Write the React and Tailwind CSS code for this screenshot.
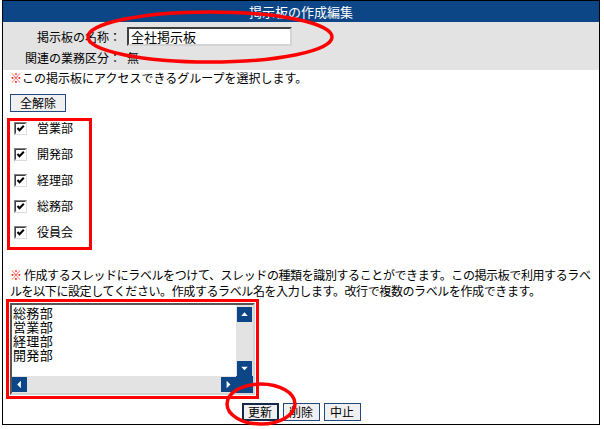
import React from "react";

function Check() {
  return (
    <span className="flex h-[13px] w-[13px] items-center justify-center border border-t-[#808080] border-l-[#808080] border-b-[#dcdcdc] border-r-[#dcdcdc] bg-white">
      <span className="flex h-[11px] w-[11px] items-center justify-center border border-t-[#404040] border-l-[#404040] border-b-white border-r-white">
        <svg width="9" height="9" viewBox="0 0 9 9">
          <path d="M1.5 4 L3.5 6.2 L7.8 1.8" stroke="#000" strokeWidth="2" fill="none" />
        </svg>
      </span>
    </span>
  );
}

function ArrowBtn({ dir }) {
  const pts = {
    up: "3.5,8.5 7,4.5 10.5,8.5",
    down: "3.5,5 7,9 10.5,5",
    left: "8.5,3 4.5,7 8.5,11",
    right: "5,3 9,7 5,11",
  }[dir];
  return (
    <span className="flex h-[15px] w-[15px] items-center justify-center border border-[#0c4687] bg-white">
      <span className="flex h-[13px] w-[13px] items-center justify-center bg-[#0c4687]">
        <svg width="13" height="13" viewBox="0 0 14 14">
          <polygon points={pts} fill="#fff" />
        </svg>
      </span>
    </span>
  );
}

export default function App() {
  const groups = ["営業部", "開発部", "経理部", "総務部", "役員会"];
  return (
    <div className="relative h-[429px] w-[604px] bg-white font-['Noto_Sans_CJK_JP','Noto_Sans',sans-serif] text-[12px] text-black">
      <div className="ml-[2px] flex h-[425px] w-[598px] flex-col border border-black bg-white">
        <div className="flex h-[21px] items-center justify-center bg-[#0c4687] text-[13px] leading-none text-white">
          掲示板の作成編集
        </div>
        <div className="grid h-[48px] grid-cols-[118px_1fr] items-center gap-x-[6px] gap-y-[4px] bg-[#e3e3e3] pt-[5px] content-start">
          <div className="text-right leading-[19px]">掲示板の名称：</div>
          <div className="flex h-[19px] w-[165px] items-center border-2 border-t-[#404040] border-l-[#404040] border-b-[#d4d4d4] border-r-[#d4d4d4] bg-white pl-[2px] text-[13px] leading-none">
            全社掲示板
          </div>
          <div className="text-right leading-[16px]">関連の業務区分：</div>
          <div className="leading-[16px]">無</div>
        </div>
        <div className="ml-[7px] leading-[16px]">
          <span className="text-[#ff0000]">※</span>この掲示板にアクセスできるグループを選択します。
        </div>
        <button className="ml-[7px] mt-[8px] flex h-[18px] w-[56px] items-center justify-center border border-[#24487e] bg-[#f0f0f0] leading-none">
          全解除
        </button>
        <div className="ml-[4px] mt-[6px] flex h-[132px] w-[85px] flex-col gap-[12px] border-[3px] border-[#ff0000] pl-[4px]">
          {groups.map((g) => (
            <div key={g} className="flex h-[14px] items-center gap-[10px]">
              <Check />
              <span className="leading-none">{g}</span>
            </div>
          ))}
        </div>
        <div className="ml-[7px] mt-[17px] whitespace-nowrap leading-[16px] tracking-[-0.4px]">
          <div>
            <span className="text-[#ff0000]">※</span> 作成するスレッドにラベルをつけて、スレッドの種類を識別することができます。この掲示板で利用するラベ
          </div>
          <div>ルを以下に設定してください。作成するラベル名を入力します。改行で複数のラベルを作成できます。</div>
        </div>
        <div className="ml-[3px] h-[100px] w-[253px] border-[3px] border-[#ff0000] p-[1px]">
          <div className="grid h-[92px] w-[245px] grid-cols-[1fr_17px] grid-rows-[1fr_17px] border-2 border-t-[#555555] border-l-[#555555] border-b-[#d4d4d4] border-r-[#d4d4d4] bg-white">
            <div className="pl-[1px] pt-[1px] text-[13px] leading-[14px] tracking-[0.35px]">
              <div>総務部</div>
              <div>営業部</div>
              <div>経理部</div>
              <div>開発部</div>
            </div>
            <div className="flex flex-col items-center justify-between bg-[#e3e3e3] pt-[2px]">
              <ArrowBtn dir="up" />
              <ArrowBtn dir="down" />
            </div>
            <div className="flex items-center justify-between bg-[#e3e3e3]">
              <ArrowBtn dir="left" />
              <ArrowBtn dir="right" />
            </div>
            <div className="bg-[#0c4687]" />
          </div>
        </div>
        <div className="mt-[4px] flex justify-center gap-[4px]">
          <button className="flex h-[18px] w-[37px] items-center justify-center border-2 border-[#15284a] bg-[#f0f0f0] leading-none">
            更新
          </button>
          <button className="flex h-[18px] w-[37px] items-center justify-center border border-[#24487e] bg-[#f0f0f0] leading-none">
            削除
          </button>
          <button className="flex h-[18px] w-[37px] items-center justify-center border border-[#24487e] bg-[#f0f0f0] leading-none">
            中止
          </button>
        </div>
      </div>
      <svg className="pointer-events-none absolute left-0 top-0" width="604" height="429">
        <ellipse cx="210" cy="37" rx="122" ry="25" fill="none" stroke="#ff0000" strokeWidth="3.5" />
        <ellipse cx="261" cy="404" rx="34" ry="20" fill="none" stroke="#ff0000" strokeWidth="3.5" />
      </svg>
    </div>
  );
}
